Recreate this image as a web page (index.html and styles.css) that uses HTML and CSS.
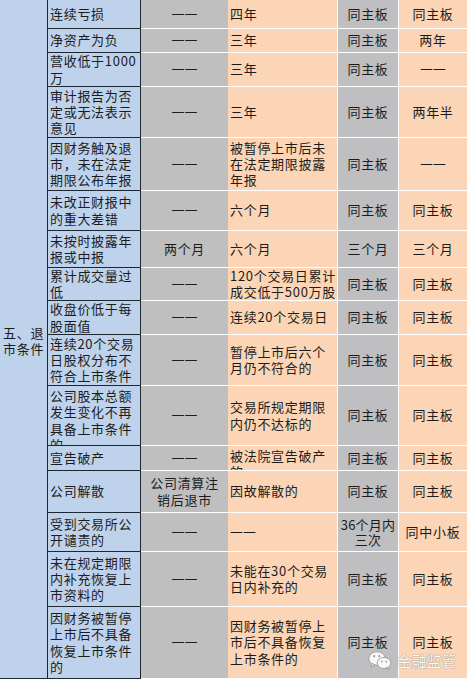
FILE: index.html
```html
<!DOCTYPE html>
<html lang="zh-CN">
<head>
<meta charset="utf-8">
<title>退市条件</title>
<link rel="stylesheet" href="styles.css">
</head>
<body>
<div class="sheet">
  <div class="grid">
    <div class="head"><span>五、退市条件</span></div>

    <div class="cell item">连续亏损</div>
    <div class="cell grey"><span class="dash">——</span></div>
    <div class="cell peach">四年</div>
    <div class="cell grey2">同主板</div>
    <div class="cell peach2">同主板</div>

    <div class="cell item">净资产为负</div>
    <div class="cell grey"><span class="dash">——</span></div>
    <div class="cell peach">三年</div>
    <div class="cell grey2">同主板</div>
    <div class="cell peach2">两年</div>

    <div class="cell item">营收低于1000<br>万</div>
    <div class="cell grey"><span class="dash">——</span></div>
    <div class="cell peach">三年</div>
    <div class="cell grey2">同主板</div>
    <div class="cell peach2"><span class="dash">——</span></div>

    <div class="cell item">审计报告为否<br>定或无法表示<br>意见</div>
    <div class="cell grey"><span class="dash">——</span></div>
    <div class="cell peach">三年</div>
    <div class="cell grey2">同主板</div>
    <div class="cell peach2">两年半</div>

    <div class="cell item">因财务触及退<br>市，未在法定<br>期限公布年报</div>
    <div class="cell grey"><span class="dash">——</span></div>
    <div class="cell peach">被暂停上市后未<br>在法定期限披露<br>年报</div>
    <div class="cell grey2">同主板</div>
    <div class="cell peach2"><span class="dash">——</span></div>

    <div class="cell item">未改正财报中<br>的重大差错</div>
    <div class="cell grey"><span class="dash">——</span></div>
    <div class="cell peach">六个月</div>
    <div class="cell grey2">同主板</div>
    <div class="cell peach2">同主板</div>

    <div class="cell item">未按时披露年<br>报或中报</div>
    <div class="cell grey">两个月</div>
    <div class="cell peach">六个月</div>
    <div class="cell grey2">三个月</div>
    <div class="cell peach2">三个月</div>

    <div class="cell item">累计成交量过<br>低</div>
    <div class="cell grey"><span class="dash">——</span></div>
    <div class="cell peach">120个交易日累计<br>成交低于500万股</div>
    <div class="cell grey2">同主板</div>
    <div class="cell peach2">同主板</div>

    <div class="cell item">收盘价低于每<br>股面值</div>
    <div class="cell grey"><span class="dash">——</span></div>
    <div class="cell peach">连续20个交易日</div>
    <div class="cell grey2">同主板</div>
    <div class="cell peach2">同主板</div>

    <div class="cell item">连续20个交易<br>日股权分布不<br>符合上市条件</div>
    <div class="cell grey"><span class="dash">——</span></div>
    <div class="cell peach">暂停上市后六个<br>月仍不符合的</div>
    <div class="cell grey2">同主板</div>
    <div class="cell peach2">同主板</div>

    <div class="cell item top">公司股本总额<br>发生变化不再<br>具备上市条件<br>的</div>
    <div class="cell grey"><span class="dash">——</span></div>
    <div class="cell peach">交易所规定期限<br>内仍不达标的</div>
    <div class="cell grey2">同主板</div>
    <div class="cell peach2">同主板</div>

    <div class="cell item">宣告破产</div>
    <div class="cell grey"><span class="dash">——</span></div>
    <div class="cell peach top">被法院宣告破产<br>的</div>
    <div class="cell grey2">同主板</div>
    <div class="cell peach2">同主板</div>

    <div class="cell item">公司解散</div>
    <div class="cell grey">公司清算注<br>销后退市</div>
    <div class="cell peach">因故解散的</div>
    <div class="cell grey2">同主板</div>
    <div class="cell peach2">同主板</div>

    <div class="cell item">受到交易所公<br>开谴责的</div>
    <div class="cell grey"><span class="dash">——</span></div>
    <div class="cell peach"><span class="dash">——</span></div>
    <div class="cell grey2 tight">36个月内<br>三次</div>
    <div class="cell peach2">同中小板</div>

    <div class="cell item">未在规定期限<br>内补充恢复上<br>市资料的</div>
    <div class="cell grey"><span class="dash">——</span></div>
    <div class="cell peach">未能在30个交易<br>日内补充的</div>
    <div class="cell grey2">同主板</div>
    <div class="cell peach2">同主板</div>

    <div class="cell item">因财务被暂停<br>上市后不具备<br>恢复上市条件<br>的</div>
    <div class="cell grey"><span class="dash">——</span></div>
    <div class="cell peach">因财务被暂停上<br>市后不具备恢复<br>上市条件的</div>
    <div class="cell grey2">同主板</div>
    <div class="cell peach2">同主板</div>
  </div>

  <div class="mark">
    <svg class="mark-icon" width="24" height="19" viewBox="0 0 24 19">
      <ellipse cx="9" cy="7.5" rx="8.2" ry="6.8" fill="#fff" stroke="#9a9a9a" stroke-width="0.9"/>
      <path d="M4 12.5 L3 16 L7 13.8 Z" fill="#fff" stroke="#9a9a9a" stroke-width="0.9" stroke-linejoin="round"/>
      <ellipse cx="16" cy="12" rx="6.8" ry="5.6" fill="#fff" stroke="#9a9a9a" stroke-width="0.9"/>
      <path d="M19.5 16.5 L21 18.6 L17.6 17.2 Z" fill="#fff" stroke="#9a9a9a" stroke-width="0.9" stroke-linejoin="round"/>
      <circle cx="6.2" cy="5.2" r="1.1" fill="#9a9a9a"/>
      <circle cx="11.2" cy="5.2" r="1.1" fill="#9a9a9a"/>
      <circle cx="13.8" cy="10.6" r="0.9" fill="#9a9a9a"/>
      <circle cx="18.3" cy="10.6" r="0.9" fill="#9a9a9a"/>
    </svg>
    <span class="mark-text">金融监管</span>
  </div>
</div>
</body>
</html>
```

FILE: styles.css
```css
html, body {
  margin: 0;
  padding: 0;
  background: #ffffff;
}

.sheet {
  position: relative;
  width: 470px;
  height: 684px;
  overflow: hidden;
}

.grid {
  display: grid;
  width: 467px;
  grid-template-columns: 48px 93px 87px 109px 61px 69px;
  grid-template-rows: 29px 24px 34px 51px 53px 40px 37px 33px 34px 51px 60px 25px 42px 39px 55px 72px;
  font-family: "Noto Sans CJK SC", "Noto Sans", sans-serif;
  font-size: 13px;
  line-height: 16.3px;
  letter-spacing: 0.7px;
  color: #1c1c1c;
}

.head {
  grid-column: 1;
  grid-row: 1 / span 16;
  background: #bfd2eb;
  border-right: 1px solid #1d2833;
  border-bottom: 1px solid #1d2833;
  display: flex;
  align-items: center;
  padding: 4px 2px 0 3px;
  box-sizing: border-box;
}

.cell {
  box-sizing: border-box;
  display: flex;
  flex-direction: column;
  justify-content: center;
  white-space: nowrap;
}

.cell.top {
  justify-content: flex-start;
  padding-top: 2px;
  overflow: hidden;
}

.dash {
  font-family: "DejaVu Sans", sans-serif;
  letter-spacing: 0;
}

.item {
  background: #bfd2eb;
  border-right: 1px solid #1d2833;
  border-bottom: 1px solid #1d2833;
  padding-left: 2px;
  align-items: flex-start;
}

.grey {
  background: #bfbfbf;
  border-bottom: 1px solid #ffffff;
  align-items: center;
  text-align: center;
}

.peach {
  background: #fbd5b5;
  border-bottom: 1px solid #ffffff;
  padding-left: 2px;
  align-items: flex-start;
}

.grey2 {
  background: #bfbfc2;
  border-left: 1px solid #ffffff;
  border-bottom: 1px solid #ffffff;
  align-items: center;
  text-align: center;
}

.grey2.tight {
  letter-spacing: 0.2px;
  line-height: 15px;
}

.peach2 {
  background: #fbd5b5;
  border-left: 1px solid #ffffff;
  border-bottom: 1px solid #ffffff;
  align-items: center;
  text-align: center;
}

.mark {
  position: absolute;
  left: 368px;
  top: 650px;
  display: flex;
  align-items: center;
  gap: 5px;
  opacity: 0.9;
}

.mark-icon {
  display: block;
}

.mark-text {
  font-family: "Noto Sans CJK SC", sans-serif;
  font-size: 14.5px;
  letter-spacing: 0.3px;
  color: #ffffff;
  text-shadow: 0 0 1px #8a8a8a, 0 0 1px #8a8a8a;
}
```
